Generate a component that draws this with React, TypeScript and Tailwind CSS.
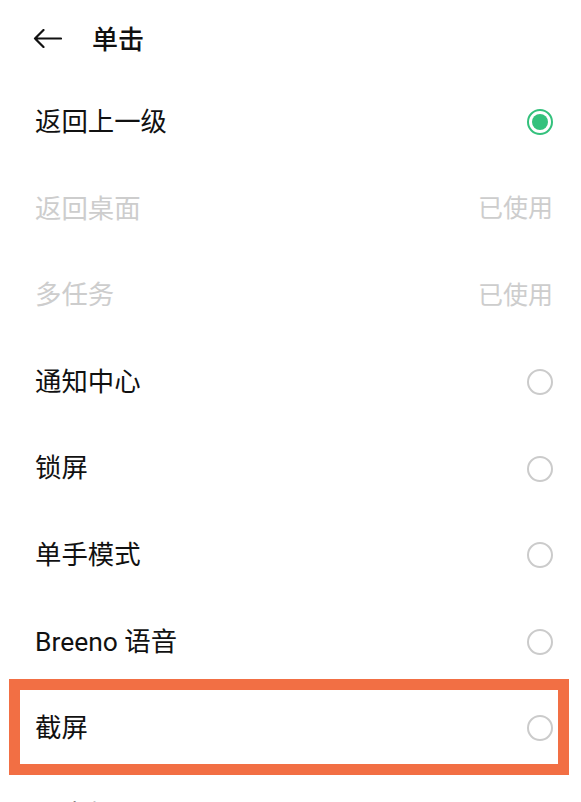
const rows: { label: string; state: "checked" | "used" | "empty"; highlight?: boolean }[] = [
  { label: "返回上一级", state: "checked" },
  { label: "返回桌面", state: "used" },
  { label: "多任务", state: "used" },
  { label: "通知中心", state: "empty" },
  { label: "锁屏", state: "empty" },
  { label: "单手模式", state: "empty" },
  { label: "Breeno 语音", state: "empty" },
  { label: "截屏", state: "empty", highlight: true },
  { label: "闪光灯", state: "empty" },
];

const Radio = ({ checked }: { checked: boolean }) =>
  checked ? (
    <div className="w-[26px] h-[26px] rounded-full border-2 border-[#33c17c] flex items-center justify-center">
      <div className="w-[16px] h-[16px] rounded-full bg-[#33c17c]" />
    </div>
  ) : (
    <div className="w-[26px] h-[26px] rounded-full border-2 border-[#cbcbcb]" />
  );

export default function App() {
  return (
    <div
      className="w-[581px] h-[802px] overflow-hidden bg-white text-[#111]"
      style={{ fontFamily: 'Roboto, "Noto Sans CJK SC", sans-serif' }}
    >
      {/* Header */}
      <div className="h-[79px] flex items-center pl-[33px]">
        <svg width="29" height="19" viewBox="0 0 29 19" fill="none" className="mb-[2px]">
          <path d="M28 9.5H2M10.5 1L2 9.5L10.5 18" stroke="#111" strokeWidth="2.2" strokeLinecap="round" strokeLinejoin="round" />
        </svg>
        <span className="ml-[30px] text-[26px] font-medium leading-none">单击</span>
      </div>

      {/* Options */}
      <div className="flex flex-col">
        {rows.map((row) => (
          <div key={row.label} className="relative h-[86.6px] flex items-center justify-between pl-[35px] pr-[28px]">
            <span className={`text-[26.4px] leading-none ${row.state === "used" ? "text-[#cdcdcd]" : "text-[#111]"}`}>
              {row.label}
            </span>
            {row.state === "used" ? (
              <span className="text-[25px] leading-none text-[#cdcdcd]">已使用</span>
            ) : (
              <Radio checked={row.state === "checked"} />
            )}
            {row.highlight && (
              <div className="absolute left-[9px] right-[12px] top-[-6px] bottom-[-3px] border-[11px] border-[#f26f44] pointer-events-none" />
            )}
          </div>
        ))}
      </div>
    </div>
  );
}
